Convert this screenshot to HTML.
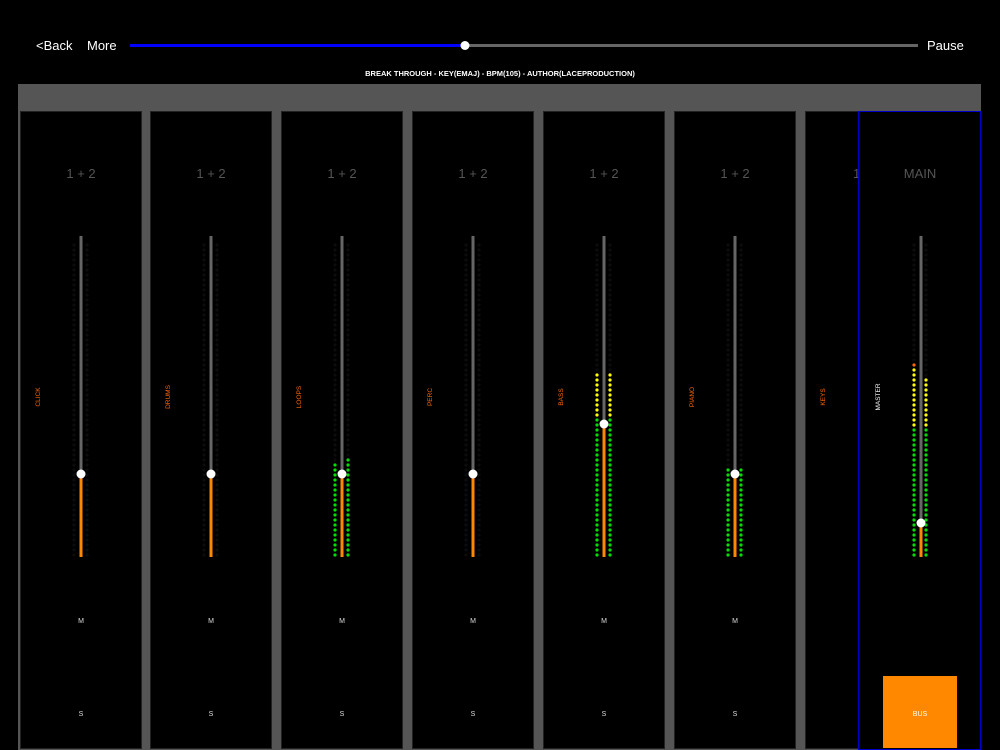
<!DOCTYPE html>
<html><head><meta charset="utf-8"><style>
body{margin:0;background:#000;width:1000px;height:750px;overflow:hidden;font-family:"Liberation Sans",sans-serif;position:relative}
.t{position:absolute;color:#fff}
</style></head><body>
<div class="t" style="left:36px;top:38px;font-size:13px">&lt;Back</div>
<div class="t" style="left:87px;top:38px;font-size:13px">More</div>
<div class="t" style="left:927px;top:38px;font-size:13px">Pause</div>
<div class="t" style="left:0;width:1000px;top:69px;font-size:7.5px;font-weight:bold;text-align:center">BREAK THROUGH - KEY(EMAJ) - BPM(105) - AUTHOR(LACEPRODUCTION)</div>
<svg id="s" width="1000" height="750" style="position:absolute;left:0;top:0" xmlns="http://www.w3.org/2000/svg"></svg>
<script>
var s='';
s+='<rect x="130" y="44" width="788" height="3" fill="#666"/><rect x="130" y="44" width="335" height="3" fill="#00f"/><circle cx="465" cy="45.5" r="4.5" fill="#fff"/>';
s+='<rect x="18" y="84" width="963" height="666" fill="#555"/>';
var L=[20,150,281,412,543,674,805];
var names=['CLICK','DRUMS','LOOPS','PERC','BASS','PIANO','KEYS'];
var thumbs=[474,474,474,474,424,474,474];
var meters=[null,null,[461,456,0,0],null,[372,372,420,420],[466,466,0,0],null];
function dots(x,top,ytop,yel){var r='';for(var y=555;y>=245;y-=5){var c;if(y<top)c='#0c0c0c';else if(yel&&y<yel)c='#ff0';else c='#0d0';r+='<circle cx="'+x+'" cy="'+y+'" r="1.6" fill="'+c+'"/>';}return r;}
for(var i=0;i<7;i++){var x=L[i];var w=(i==6)?60:121;
 s+='<rect x="'+(x+0.5)+'" y="111.5" width="'+w+'" height="637" fill="#000" stroke="#222"/>';
 if(i==6)continue;
 var c=x+61;
 s+='<text x="'+c+'" y="178" fill="#555" font-size="13" text-anchor="middle">1 + 2</text>';
 var m=meters[i];
 s+=dots(c-7,m?m[0]:9999,0,m?m[2]:0)+dots(c+6,m?m[1]:9999,0,m?m[3]:0);
 s+='<rect x="'+(c-1.5)+'" y="236" width="3" height="321" fill="#666"/>';
 s+='<rect x="'+(c-1.5)+'" y="'+thumbs[i]+'" width="3" height="'+(557-thumbs[i])+'" fill="#f80"/>';
 s+='<circle cx="'+c+'" cy="'+thumbs[i]+'" r="4.5" fill="#fff"/>';
 s+='<text x="'+(x+20)+'" y="397" fill="#f60" font-size="6.5" text-anchor="middle" transform="rotate(-90 '+(x+20)+' 397)">'+names[i]+'</text>';
 s+='<text x="'+c+'" y="623" fill="#ddd" font-size="7" text-anchor="middle">M</text>';
 s+='<text x="'+c+'" y="716" fill="#ddd" font-size="7" text-anchor="middle">S</text>';
}
s+='<text x="853" y="178" fill="#555" font-size="13">1</text>';
s+='<text x="825" y="397" fill="#f60" font-size="6.5" text-anchor="middle" transform="rotate(-90 825 397)">KEYS</text>';
s+='<rect x="858.5" y="111.5" width="122" height="638" fill="#000" stroke="#00c"/>';
s+='<text x="920" y="178" fill="#555" font-size="13" text-anchor="middle">MAIN</text>';
var c=921;
var r='';for(var y=555;y>=245;y-=5){var col=y<362?'#0c0c0c':(y<366?'#f60':(y<430?'#ff0':'#0d0'));r+='<circle cx="'+(c-7)+'" cy="'+y+'" r="1.6" fill="'+col+'"/>';col=y<377?'#0c0c0c':(y<430?'#ff0':'#0d0');r+='<circle cx="'+(c+5)+'" cy="'+y+'" r="1.6" fill="'+col+'"/>';}
s+=r;
s+='<rect x="'+(c-1.5)+'" y="236" width="3" height="321" fill="#666"/><rect x="'+(c-1.5)+'" y="523" width="3" height="34" fill="#f80"/><circle cx="'+c+'" cy="523" r="4.5" fill="#fff"/>';
s+='<text x="880" y="397" fill="#fff" font-size="6.5" text-anchor="middle" transform="rotate(-90 880 397)">MASTER</text>';
s+='<rect x="883" y="676" width="74" height="72" fill="#f80"/><text x="920" y="716" fill="#fff" font-size="7" text-anchor="middle">BUS</text>';
document.getElementById('s').innerHTML=s;
</script>
</body></html>
